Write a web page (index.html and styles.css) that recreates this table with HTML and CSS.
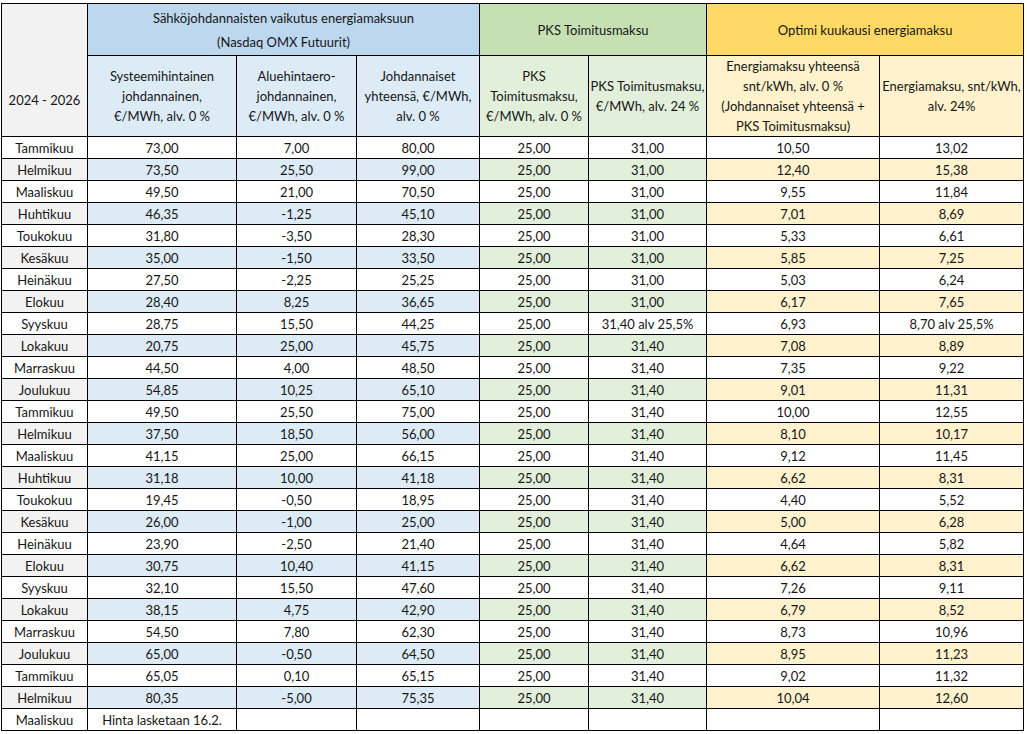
FILE: index.html
```html
<!DOCTYPE html>
<html lang="fi">
<head>
<meta charset="utf-8">
<title>Optimi kuukausi energiamaksu</title>
<link rel="stylesheet" href="styles.css">
</head>
<body>
<table class="prices">
  <colgroup>
    <col class="c-month">
    <col class="c-sys">
    <col class="c-area">
    <col class="c-sum">
    <col class="c-pks0">
    <col class="c-pks24">
    <col class="c-e0">
    <col class="c-e24">
  </colgroup>
  <thead>
    <tr class="group">
      <th rowspan="2" class="corner">2024 - 2026</th>
      <th colspan="3" class="g-blue">Sähköjohdannaisten vaikutus energiamaksuun<br>(Nasdaq OMX Futuurit)</th>
      <th colspan="2" class="g-green">PKS Toimitusmaksu</th>
      <th colspan="2" class="g-yellow">Optimi kuukausi energiamaksu</th>
    </tr>
    <tr class="sub">
      <th class="s-blue">Systeemihintainen<br>johdannainen,<br>€/MWh, alv. 0 %</th>
      <th class="s-blue">Aluehintaero-<br>johdannainen,<br>€/MWh, alv. 0 %</th>
      <th class="s-blue">Johdannaiset<br>yhteensä, €/MWh,<br>alv. 0 %</th>
      <th class="s-green">PKS<br>Toimitusmaksu,<br>€/MWh, alv. 0 %</th>
      <th class="s-green">PKS Toimitusmaksu,<br>€/MWh, alv. 24 %</th>
      <th class="s-yellow">Energiamaksu yhteensä<br>snt/kWh, alv. 0 %<br>(Johdannaiset yhteensä +<br>PKS Toimitusmaksu)</th>
      <th class="s-yellow">Energiamaksu, snt/kWh,<br>alv. 24%</th>
    </tr>
  </thead>
  <tbody>
    <tr><td class="m">Tammikuu</td><td class="b">73,00</td><td class="b">7,00</td><td class="b">80,00</td><td class="g">25,00</td><td class="g">31,00</td><td class="y">10,50</td><td class="y">13,02</td></tr>
    <tr><td class="m">Helmikuu</td><td class="b">73,50</td><td class="b">25,50</td><td class="b">99,00</td><td class="g">25,00</td><td class="g">31,00</td><td class="y">12,40</td><td class="y">15,38</td></tr>
    <tr><td class="m">Maaliskuu</td><td class="b">49,50</td><td class="b">21,00</td><td class="b">70,50</td><td class="g">25,00</td><td class="g">31,00</td><td class="y">9,55</td><td class="y">11,84</td></tr>
    <tr><td class="m">Huhtikuu</td><td class="b">46,35</td><td class="b">-1,25</td><td class="b">45,10</td><td class="g">25,00</td><td class="g">31,00</td><td class="y">7,01</td><td class="y">8,69</td></tr>
    <tr><td class="m">Toukokuu</td><td class="b">31,80</td><td class="b">-3,50</td><td class="b">28,30</td><td class="g">25,00</td><td class="g">31,00</td><td class="y">5,33</td><td class="y">6,61</td></tr>
    <tr><td class="m">Kesäkuu</td><td class="b">35,00</td><td class="b">-1,50</td><td class="b">33,50</td><td class="g">25,00</td><td class="g">31,00</td><td class="y">5,85</td><td class="y">7,25</td></tr>
    <tr><td class="m">Heinäkuu</td><td class="b">27,50</td><td class="b">-2,25</td><td class="b">25,25</td><td class="g">25,00</td><td class="g">31,00</td><td class="y">5,03</td><td class="y">6,24</td></tr>
    <tr><td class="m">Elokuu</td><td class="b">28,40</td><td class="b">8,25</td><td class="b">36,65</td><td class="g">25,00</td><td class="g">31,00</td><td class="y">6,17</td><td class="y">7,65</td></tr>
    <tr><td class="m">Syyskuu</td><td class="b">28,75</td><td class="b">15,50</td><td class="b">44,25</td><td class="g">25,00</td><td class="g">31,40 alv 25,5%</td><td class="y">6,93</td><td class="y">8,70 alv 25,5%</td></tr>
    <tr><td class="m">Lokakuu</td><td class="b">20,75</td><td class="b">25,00</td><td class="b">45,75</td><td class="g">25,00</td><td class="g">31,40</td><td class="y">7,08</td><td class="y">8,89</td></tr>
    <tr><td class="m">Marraskuu</td><td class="b">44,50</td><td class="b">4,00</td><td class="b">48,50</td><td class="g">25,00</td><td class="g">31,40</td><td class="y">7,35</td><td class="y">9,22</td></tr>
    <tr><td class="m">Joulukuu</td><td class="b">54,85</td><td class="b">10,25</td><td class="b">65,10</td><td class="g">25,00</td><td class="g">31,40</td><td class="y">9,01</td><td class="y">11,31</td></tr>
    <tr><td class="m">Tammikuu</td><td class="b">49,50</td><td class="b">25,50</td><td class="b">75,00</td><td class="g">25,00</td><td class="g">31,40</td><td class="y">10,00</td><td class="y">12,55</td></tr>
    <tr><td class="m">Helmikuu</td><td class="b">37,50</td><td class="b">18,50</td><td class="b">56,00</td><td class="g">25,00</td><td class="g">31,40</td><td class="y">8,10</td><td class="y">10,17</td></tr>
    <tr><td class="m">Maaliskuu</td><td class="b">41,15</td><td class="b">25,00</td><td class="b">66,15</td><td class="g">25,00</td><td class="g">31,40</td><td class="y">9,12</td><td class="y">11,45</td></tr>
    <tr><td class="m">Huhtikuu</td><td class="b">31,18</td><td class="b">10,00</td><td class="b">41,18</td><td class="g">25,00</td><td class="g">31,40</td><td class="y">6,62</td><td class="y">8,31</td></tr>
    <tr><td class="m">Toukokuu</td><td class="b">19,45</td><td class="b">-0,50</td><td class="b">18,95</td><td class="g">25,00</td><td class="g">31,40</td><td class="y">4,40</td><td class="y">5,52</td></tr>
    <tr><td class="m">Kesäkuu</td><td class="b">26,00</td><td class="b">-1,00</td><td class="b">25,00</td><td class="g">25,00</td><td class="g">31,40</td><td class="y">5,00</td><td class="y">6,28</td></tr>
    <tr><td class="m">Heinäkuu</td><td class="b">23,90</td><td class="b">-2,50</td><td class="b">21,40</td><td class="g">25,00</td><td class="g">31,40</td><td class="y">4,64</td><td class="y">5,82</td></tr>
    <tr><td class="m">Elokuu</td><td class="b">30,75</td><td class="b">10,40</td><td class="b">41,15</td><td class="g">25,00</td><td class="g">31,40</td><td class="y">6,62</td><td class="y">8,31</td></tr>
    <tr><td class="m">Syyskuu</td><td class="b">32,10</td><td class="b">15,50</td><td class="b">47,60</td><td class="g">25,00</td><td class="g">31,40</td><td class="y">7,26</td><td class="y">9,11</td></tr>
    <tr><td class="m">Lokakuu</td><td class="b">38,15</td><td class="b">4,75</td><td class="b">42,90</td><td class="g">25,00</td><td class="g">31,40</td><td class="y">6,79</td><td class="y">8,52</td></tr>
    <tr><td class="m">Marraskuu</td><td class="b">54,50</td><td class="b">7,80</td><td class="b">62,30</td><td class="g">25,00</td><td class="g">31,40</td><td class="y">8,73</td><td class="y">10,96</td></tr>
    <tr><td class="m">Joulukuu</td><td class="b">65,00</td><td class="b">-0,50</td><td class="b">64,50</td><td class="g">25,00</td><td class="g">31,40</td><td class="y">8,95</td><td class="y">11,23</td></tr>
    <tr><td class="m">Tammikuu</td><td class="b">65,05</td><td class="b">0,10</td><td class="b">65,15</td><td class="g">25,00</td><td class="g">31,40</td><td class="y">9,02</td><td class="y">11,32</td></tr>
    <tr><td class="m">Helmikuu</td><td class="b">80,35</td><td class="b">-5,00</td><td class="b">75,35</td><td class="g">25,00</td><td class="g">31,40</td><td class="y">10,04</td><td class="y">12,60</td></tr>
    <tr><td class="m">Maaliskuu</td><td class="b">Hinta lasketaan 16.2.</td><td class="b"></td><td class="b"></td><td class="g"></td><td class="g"></td><td class="y"></td><td class="y"></td></tr>
  </tbody>
</table>
</body>
</html>
```

FILE: styles.css
```css
body {
  margin: 0;
  background: #ffffff;
  font-family: Lato, "Liberation Sans", sans-serif;
  font-size: 13px;
  color: #161616;
}

.prices {
  border-collapse: collapse;
  table-layout: fixed;
  width: 1023px;
  margin: 3px 0 0 1px;
}

.c-month { width: 86px; }
.c-sys { width: 149px; }
.c-area { width: 120px; }
.c-sum { width: 123px; }
.c-pks0 { width: 109px; }
.c-pks24 { width: 118px; }
.c-e0 { width: 173px; }
.c-e24 { width: 144px; }

.prices th,
.prices td {
  border: 1px solid #000000;
  padding: 0;
  text-align: center;
  font-weight: normal;
  white-space: nowrap;
}

.prices th {
  line-height: 20px;
}

.group th {
  height: 51px;
  line-height: 24px;
}

.sub th {
  height: 80px;
}

.corner {
  background: #f2f2f2;
  vertical-align: bottom;
  padding-bottom: 24px !important;
}

.g-blue { background: #bdd7ee; }
.g-green { background: #c6e0b4; }
.g-yellow { background: #ffd966; }

.s-blue { background: #ddebf7; }
.s-green { background: #e2efda; }
.s-yellow { background: #fff2cc; }

.prices td {
  height: 21px;
  line-height: 20px;
  background: #ffffff;
}

.prices tbody tr:nth-child(even) td.m { background: #f2f2f2; }
.prices tbody tr:nth-child(even) td.b { background: #ddebf7; }
.prices tbody tr:nth-child(even) td.g { background: #e2efda; }
.prices tbody tr:nth-child(even) td.y { background: #fff2cc; }
```
